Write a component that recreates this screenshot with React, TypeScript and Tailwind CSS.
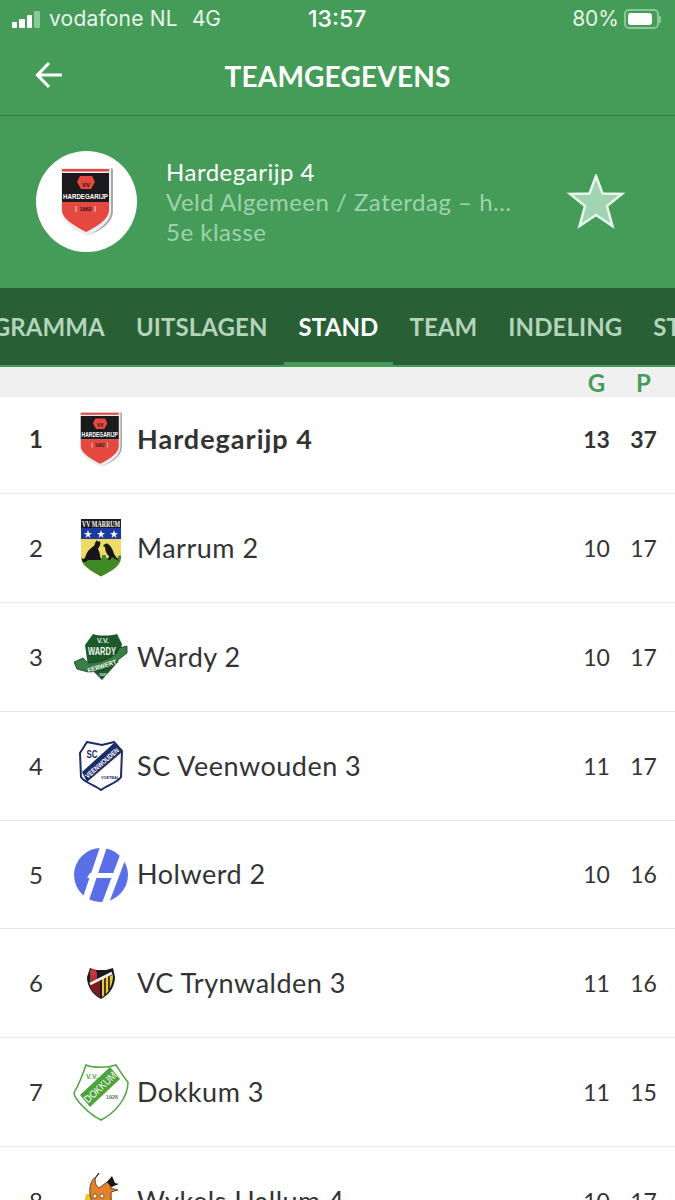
import React from "react";

function HardegarijpLogo({ w, h }: { w: number; h: number }) {
  return (
    <svg width={w} height={h} viewBox="0 0 52 68">
      <path d="M0 0H50V42C50 54 38 62 26 67.500C13 62 0 54 0 42Z" fill="#ecebec" />
      <path d="M50 0L52 1V43C52 55 39 63 26 68C38 62 50 54 50 42Z" fill="#a9a9ad" />
      <path d="M1 1H48V3.500H1Z" fill="#e5483f" />
      <path d="M1 5H48V34H1Z" fill="#1b1a1c" />
      <path d="M1 34H48V42C48 51 37 58 25 64C14 58 1 51 1 42Z" fill="#e5483f" />
      <path d="M19 8H31L34 14L30 21H20L16 14Z" fill="#e5483f" />
      <text x="25" y="18.500" textAnchor="middle" fontFamily="Liberation Sans" fontWeight="700" fontSize="6" fill="#1b1a1c">VV</text>
      <text x="24.500" y="31" textAnchor="middle" fontFamily="Liberation Sans" fontWeight="700" fontSize="8" fill="#fff" textLength="45" lengthAdjust="spacingAndGlyphs">HARDEGARIJP</text>
      <text x="24.500" y="43" textAnchor="middle" fontFamily="Liberation Sans" fontWeight="700" fontSize="5.500" fill="#2a1a1a">1962</text>
      <path d="M15 38V44M34 38V44" stroke="#fff" strokeWidth="0.800" />
    </svg>
  );
}

function MarrumLogo() {
  return (
    <svg width="40" height="58" viewBox="0 0 40 58">
      <path d="M0 0H40V38C40 48 28 53 20 57.500C12 53 0 48 0 38Z" fill="#f0da66" />
      <rect width="40" height="9" fill="#1c1a1e" />
      <text x="20" y="7.500" textAnchor="middle" fontFamily="Liberation Serif" fontWeight="700" fontSize="8" fill="#fff" textLength="38" lengthAdjust="spacingAndGlyphs">VV MARRUM</text>
      <rect y="9" width="40" height="11" fill="#1b3aa0" />
      <path d="M7 11L8 14L11 14L8.500 16L9.500 19L7 17L4.500 19L5.500 16L3 14L6 14ZM20 11L21 14L24 14L21.500 16L22.500 19L20 17L17.500 19L18.500 16L16 14L19 14ZM33 11L34 14L37 14L34.500 16L35.500 19L33 17L30.500 19L31.500 16L29 14L32 14Z" fill="#fff" />
      <path d="M1 42L0 38L3 41H13V36H17V39H21V36H25V39H29V36H33V39H37V37L40 36V38C40 48 28 53 20 57.500C12 53 3 48 1 42Z" fill="#3f8a26" />
      <path d="M1 40C5 41 4 35 8 31C11 28 14 27 14 24L16 21L17 23L19 22C20 26 18 28 17 30C19 33 19 37 20 41H7C4 44 1 44 1 40Z" fill="#17171a" />
      <path d="M22 27C23 25 26 24 27 25C30 27 32 31 33 35L38 42L31 38L29 41H27L28 37C25 35 24 30 24 28Z" fill="#17171a" />
    </svg>
  );
}

function WardyLogo() {
  return (
    <svg width="54" height="47" viewBox="0 0 54 47">
      <path d="M19 0C25 2 35 2 43 0L48 10L44 28L28 46L14 32L11 11Z" fill="#1d5a2a" />
      <path d="M0 28L9 24L14 29C24 29 34 26 43 19L45 14L53 12L53 19L44 26C35 34 24 38 14 38L3 35Z" fill="#3b7f48" stroke="#123d1b" strokeWidth="0.800" />
      <text x="29" y="9" textAnchor="middle" fontFamily="Liberation Sans" fontWeight="700" fontSize="7" fill="#e7efe8">V.V.</text>
      <text x="28" y="21" textAnchor="middle" fontFamily="Liberation Sans" fontWeight="700" fontSize="11" fill="#eef3ee" textLength="28" lengthAdjust="spacingAndGlyphs">WARDY</text>
      <text x="28" y="34.500" textAnchor="middle" fontFamily="Liberation Sans" fontWeight="700" fontSize="6.500" fill="#f0f5f0" transform="rotate(-18 28 32)" textLength="30" lengthAdjust="spacingAndGlyphs">FERWERT</text>
      <text x="29" y="42" textAnchor="middle" fontFamily="Liberation Sans" fontWeight="700" fontSize="3.600" fill="#e7efe8">1921</text>
    </svg>
  );
}

function VeenwoudenLogo() {
  return (
    <svg width="44" height="50" viewBox="0 0 44 50">
      <path d="M8 1L23 4L35 1L43 10L42 36C38 42 28 44 22 49C16 44 6 42 2 36L1 12Z" fill="#fff" stroke="#1b2c66" strokeWidth="2" />
      <path d="M3 31L35 2L43 11L8 41Z" fill="#1b2c66" />
      <text x="13" y="17" textAnchor="middle" fontFamily="Liberation Sans" fontWeight="700" fontSize="10" fill="#1b2c66" textLength="11" lengthAdjust="spacingAndGlyphs">SC</text>
      <text x="23" y="24.500" textAnchor="middle" fontFamily="Liberation Sans" fontWeight="700" fontSize="7" fill="#fff" transform="rotate(-41 23 22)" textLength="42" lengthAdjust="spacingAndGlyphs">VEENWOUDEN</text>
      <text x="31" y="38" textAnchor="middle" fontFamily="Liberation Sans" fontWeight="700" fontSize="3.800" fill="#1b2c66">VOETBAL</text>
    </svg>
  );
}

function HolwerdLogo() {
  return (
    <svg width="54" height="54" viewBox="0 0 54 54">
      <circle cx="27" cy="27" r="27" fill="#5a6fe6" />
      <path d="M26 -1H33L14 55H7Z" fill="#fff" />
      <path d="M49 -1H56L35 55H28Z" fill="#fff" />
      <path d="M16 25H44L41 30H13Z" fill="#fff" />
    </svg>
  );
}

function TrynwaldenLogo() {
  return (
    <svg width="28" height="33" viewBox="0 0 28 33">
      <path d="M3 1L9 3H19L26 1L28 10C28 20 22 28 14 32C6 28 0 20 0 10Z" fill="#1b1a1c" />
      <path d="M3 5H10V12L3 15Z" fill="#b5343a" />
      <path d="M2 16L13 11V30C7 27 3 22 2 16Z" fill="#7c1d24" />
      <path d="M15 11L26 8C26 17 22 26 15 30Z" fill="#efc73a" />
      <path d="M18 10V28M22 9V23" stroke="#1b1a1c" strokeWidth="1.600" />
      <path d="M3 17L25 6" stroke="#f0efe9" strokeWidth="2.600" />
      <circle cx="6" cy="5" r="3" fill="#c63a3f" />
    </svg>
  );
}

function DokkumLogo() {
  return (
    <svg width="56" height="57" viewBox="0 0 56 57">
      <path d="M13 1C20 4 34 4 43 1C47 7 51 14 55 18C55 34 42 49 28 56C14 49 1 34 1 29C6 20 10 10 13 1Z" fill="#fff" stroke="#4da43c" strokeWidth="1.500" />
      <path d="M7 31L37 3L47 15L17 43Z" fill="#4da43c" />
      <text x="27" y="27" textAnchor="middle" fontFamily="Liberation Sans" fontSize="10.500" fill="#fff" transform="rotate(-43 27 23)" textLength="40" lengthAdjust="spacingAndGlyphs">DOKKUM</text>
      <text x="19" y="15" textAnchor="middle" fontFamily="Liberation Sans" fontWeight="700" fontSize="7" fill="#4da43c">V.V.</text>
      <text x="39" y="35" textAnchor="middle" fontFamily="Liberation Sans" fontWeight="700" fontSize="5.500" fill="#5d7a58">1926</text>
    </svg>
  );
}

function WykelsLogo() {
  return (
    <svg width="38" height="56" viewBox="0 0 38 56">
      <path d="M4 21C2 30 2 40 6 50H30C34 40 32 28 28 22Z" fill="#f0c41e" />
      <path d="M8 22C7 14 9 6 14 4C12 9 14 13 17 15L25 9C29 5 33 9 31 13L28 15L36 17L29 19C30 28 28 32 24 34C16 36 10 32 8 22Z" fill="#e2832a" stroke="#2a1a10" strokeWidth="0.700" />
      <path d="M25 9L30 3L33 10L37 11L29 14Z" fill="#17171a" />
      <path d="M14 4L17 0" stroke="#17171a" strokeWidth="1.200" />
      <path d="M20 36H34V50H20Z" fill="#d83a26" />
      <circle cx="13" cy="23" r="2" fill="#fff" stroke="#2a1a10" strokeWidth="0.600" />
      <circle cx="20" cy="23" r="2" fill="#fff" stroke="#2a1a10" strokeWidth="0.600" />
    </svg>
  );
}

const rows = [
  { n: 1, name: "Hardegarijp 4", g: 13, p: 37, logo: <HardegarijpLogo w={42} h={55} /> },
  { n: 2, name: "Marrum 2", g: 10, p: 17, logo: <MarrumLogo /> },
  { n: 3, name: "Wardy 2", g: 10, p: 17, logo: <WardyLogo /> },
  { n: 4, name: "SC Veenwouden 3", g: 11, p: 17, logo: <VeenwoudenLogo /> },
  { n: 5, name: "Holwerd 2", g: 10, p: 16, logo: <HolwerdLogo /> },
  { n: 6, name: "VC Trynwalden 3", g: 11, p: 16, logo: <TrynwaldenLogo /> },
  { n: 7, name: "Dokkum 3", g: 11, p: 15, logo: <DokkumLogo /> },
  { n: 8, name: "Wykels Hallum 4", g: 10, p: 17, logo: <WykelsLogo /> },
];

export default function App() {
  return (
    <div className="w-[675px] h-[1200px] overflow-hidden bg-white font-['Lato',sans-serif]">
      <div className="bg-[#459c58] h-[288px] text-white">
        {/* status bar */}
        <div className="h-[38px] relative flex items-center pl-3 pr-[14px] font-['Inter',sans-serif] text-[21px] text-[#e8f3ea]">
          <div className="flex items-end gap-[2px] w-[29px] h-[17px] shrink-0">
            <span className="w-[5px] h-[6px] bg-white rounded-[1px]" />
            <span className="w-[6px] h-[9px] bg-white rounded-[1px]" />
            <span className="w-[5px] h-[13px] bg-white rounded-[1px]" />
            <span className="w-[6px] h-[17px] bg-[#8cc69b] rounded-[1px]" />
          </div>
          <span className="ml-2 w-[144px] tracking-[0.2px]">vodafone NL</span>
          <span className="-ml-[1px] tracking-[-0.3px]">4G</span>
          <span className="absolute left-[308px] top-[5px] text-[23px] leading-[28px] font-medium text-white">13:57</span>
          <span className="ml-auto mr-[-1px]">80%</span>
          <div className="ml-[6px] w-[35px] h-[20px] rounded-[5px] border-2 border-[#8cc69b] p-[2px]">
            <div className="h-full w-[24px] bg-white rounded-[3px]" />
          </div>
          <div className="w-[2px] h-[7px] bg-[#8cc69b] rounded-r-[1px]" />
        </div>
        {/* title */}
        <div className="h-[78px] border-b border-[#2e7a42] relative flex items-center justify-center pb-[2px]">
          <svg className="absolute left-[34px] top-[23px]" width="30" height="28" viewBox="0 0 30 28" fill="none" stroke="#fff" strokeWidth="3.200">
            <path d="M28 14H4M15 2L3.500 14L15 26" />
          </svg>
          <span className="text-[28px] font-bold tracking-[0.2px] leading-none">TEAMGEGEVENS</span>
        </div>
        {/* team info */}
        <div className="flex items-center h-[172px] pb-[1px] pl-9">
          <div className="w-[101px] h-[101px] rounded-full bg-white flex items-center justify-center shrink-0">
            <HardegarijpLogo w={52} h={68} />
          </div>
          <div className="ml-[29px] w-[346px] text-[24px] leading-[30px] tracking-[0.5px]">
            <div>Hardegarijp 4</div>
            <div className="text-[#a0d2ae] truncate">Veld Algemeen / Zaterdag – hele dag</div>
            <div className="text-[#a0d2ae]">5e klasse</div>
          </div>
          <svg className="ml-[54px]" width="60" height="56" viewBox="0 0 60 56">
            <path d="M30 2L36.500 19.500L56 20L41 32L46.500 52L30 41L13.500 52L19 32L4 20L23.500 19.500Z" fill="#a2d3b2" stroke="#e8f6ec" strokeWidth="2.500" />
          </svg>
        </div>
      </div>

      {/* tabs */}
      <div className="h-[79px] bg-[#285f35] border-b-[2px] border-[#459c58] overflow-hidden">
        <div className="flex gap-[31px] ml-[-57px] text-[24px] font-bold tracking-[0.1px] text-[#b5d4bc] whitespace-nowrap leading-[77px] h-[77px]">
          <span>PROGRAMMA</span>
          <span>UITSLAGEN</span>
          <span className="relative text-white h-[77px]">
            STAND
            <span className="absolute left-[-15px] right-[-15px] bottom-0 h-[3px] bg-[#459c58]" />
          </span>
          <span>TEAM</span>
          <span>INDELING</span>
          <span>STATISTIEKEN</span>
        </div>
      </div>

      {/* table header */}
      <div className="h-[30px] bg-[#f0f0f0] flex justify-end pr-[8px] text-[24px] font-bold text-[#459c58] leading-[32px]">
        <span className="w-[47px] text-center">G</span>
        <span className="w-[47px] text-center">P</span>
      </div>

      {rows.map((r, i) => (
        <div
          key={r.n}
          className={`flex items-center border-b border-[#e5e5e5] pr-[8px] text-[#333333] ${
            i === 0 ? "h-[97px] pb-[12px] font-bold" : i === 4 ? "h-[108px]" : "h-[109px]"
          }`}
        >
          <span className="w-[72px] text-center text-[24px]">{r.n}</span>
          <div className="w-[58px] flex justify-center shrink-0">{r.logo}</div>
          <span className={`ml-[7px] flex-1 text-[27px] ${i === 0 ? "tracking-[1px]" : "tracking-[0.5px]"}`}>{r.name}</span>
          <span className="w-[47px] text-center text-[23px]">{r.g}</span>
          <span className="w-[47px] text-center text-[23px]">{r.p}</span>
        </div>
      ))}
    </div>
  );
}
